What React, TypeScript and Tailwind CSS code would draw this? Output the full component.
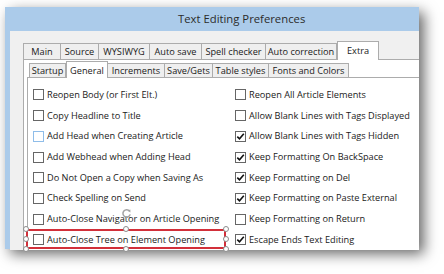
import React from "react";

type Item = { label: string; checked?: boolean; hover?: boolean; marked?: boolean };

const outerTabs = [
  { label: "Main", w: 38 },
  { label: "Source", w: 39 },
  { label: "WYSIWYG", w: 52 },
  { label: "Auto save", w: 53 },
  { label: "Spell checker", w: 65 },
  { label: "Auto correction", w: 72 },
  { label: "Extra", w: 42, selected: true },
];

const innerTabs = [
  { label: "Startup", w: 37 },
  { label: "General", w: 42, selected: true },
  { label: "Increments", w: 58 },
  { label: "Save/Gets", w: 49 },
  { label: "Table styles", w: 57 },
  { label: "Fonts and Colors", w: 81 },
];

const leftItems: Item[] = [
  { label: "Reopen Body (or First Elt.)" },
  { label: "Copy Headline to Title" },
  { label: "Add Head when Creating Article", hover: true },
  { label: "Add Webhead when Adding Head" },
  { label: "Do Not Open a Copy when Saving As" },
  { label: "Check Spelling on Send" },
  { label: "Auto-Close Navigator on Article Opening" },
  { label: "Auto-Close Tree on Element Opening", marked: true },
];

const rightItems: Item[] = [
  { label: "Reopen All Article Elements" },
  { label: "Allow Blank Lines with Tags Displayed" },
  { label: "Allow Blank Lines with Tags Hidden", checked: true },
  { label: "Keep Formatting On BackSpace", checked: true },
  { label: "Keep Formatting on Del", checked: true },
  { label: "Keep Formatting on Paste External", checked: true },
  { label: "Keep Formatting on Return" },
  { label: "Escape Ends Text Editing", checked: true },
];

function Tab({ label, w, selected, tall }: { label: string; w: number; selected?: boolean; tall: number }) {
  if (selected) {
    return (
      <div
        className="relative z-10 -mb-px flex items-start justify-center border border-b-0 border-[#acacac] bg-white pt-[2px]"
        style={{ width: w, height: tall + 1 }}
      >
        {label}
      </div>
    );
  }
  return (
    <div
      className="-ml-px flex items-center justify-center border border-b-0 border-[#acacac] bg-[#efefef] first:ml-0"
      style={{ width: w, height: tall - 2 }}
    >
      {label}
    </div>
  );
}

function Handle({ className }: { className: string }) {
  return <div className={`absolute h-[6px] w-[6px] rounded-full border border-[#8c8c8c] bg-white ${className}`} />;
}

function CheckRow({ item }: { item: Item }) {
  return (
    <div className="relative flex h-[20.7px] items-center gap-[3px]">
      <div
        className={`flex h-[11px] w-[11px] shrink-0 items-center justify-center border bg-white ${
          item.hover ? "border-[#8fbde9]" : "border-[#666]"
        }`}
      >
        {item.checked && (
          <svg width="9" height="9" viewBox="0 0 9 9">
            <path d="M1.3 4.6 L3.5 6.8 L7.8 1.8" fill="none" stroke="#111" strokeWidth="1.6" />
          </svg>
        )}
      </div>
      <span className="whitespace-nowrap">{item.label}</span>
      {item.marked && (
        <>
          {/* selection box drawn over the row */}
          <div className="absolute left-[-7px] top-[-0.5px] h-[20px] w-[200px] border-2 border-[#d2303a]" />
          <Handle className="left-[-10px] top-[-3.5px]" />
          <Handle className="left-[90px] top-[-3.5px]" />
          <Handle className="left-[190px] top-[-3.5px]" />
          <Handle className="left-[-10px] top-[6.5px]" />
          <Handle className="left-[190px] top-[6.5px]" />
          <Handle className="left-[-10px] top-[16.5px]" />
          <Handle className="left-[90px] top-[16.5px]" />
          <Handle className="left-[190px] top-[16.5px]" />
          <svg className="absolute left-[88px] top-[-21px]" width="11" height="11" viewBox="0 0 11 11">
            <path d="M8.6 3.2 A3.7 3.7 0 1 0 9.2 6.4" fill="none" stroke="#a3a3a3" strokeWidth="1.5" />
            <path d="M6.6 2.6 L9.4 1.4 L9.4 4.4 Z" fill="#a3a3a3" />
          </svg>
        </>
      )}
    </div>
  );
}

export default function App() {
  return (
    <div className="relative h-[274px] w-[444px] overflow-hidden bg-white font-['Open_Sans',sans-serif] text-[9.2px] text-[#1a1a1a]">
      <div className="ml-[5px] mt-[7px] flex h-[242px] w-[414px] flex-col bg-[#abcbea] shadow-[5px_5px_13px_rgba(0,0,0,0.6)]">
        {/* Title bar */}
        <div className="flex h-[24px] shrink-0 items-center pl-[173px] text-[11.3px] text-[#2b2b2b]">
          Text Editing Preferences
        </div>

        {/* Window body */}
        <div className="ml-[5px] flex flex-1 flex-col bg-[#f0f0f0] pl-[13px] pt-[10px]">
          {/* Outer tab strip */}
          <div className="flex h-[18px] items-end">
            {outerTabs.map((t) => (
              <Tab key={t.label} label={t.label} w={t.w} selected={t.selected} tall={18} />
            ))}
          </div>

          {/* Outer panel */}
          <div className="flex flex-1 flex-col border-l border-t border-[#acacac] bg-white pl-[3px] pt-[1px]">
            {/* Inner tab strip */}
            <div className="flex h-[16px] items-end pl-[2px]">
              {innerTabs.map((t) => (
                <Tab key={t.label} label={t.label} w={t.w} selected={t.selected} tall={16} />
              ))}
            </div>

            {/* Inner panel */}
            <div className="flex-1 border-l border-t border-[#acacac] bg-white pl-[5px] pt-[6.6px]">
              <div className="grid grid-cols-[202px_1fr]">
                {leftItems.map((l, i) => (
                  <React.Fragment key={l.label}>
                    <CheckRow item={l} />
                    <CheckRow item={rightItems[i]} />
                  </React.Fragment>
                ))}
              </div>
            </div>
          </div>
        </div>
      </div>
    </div>
  );
}
